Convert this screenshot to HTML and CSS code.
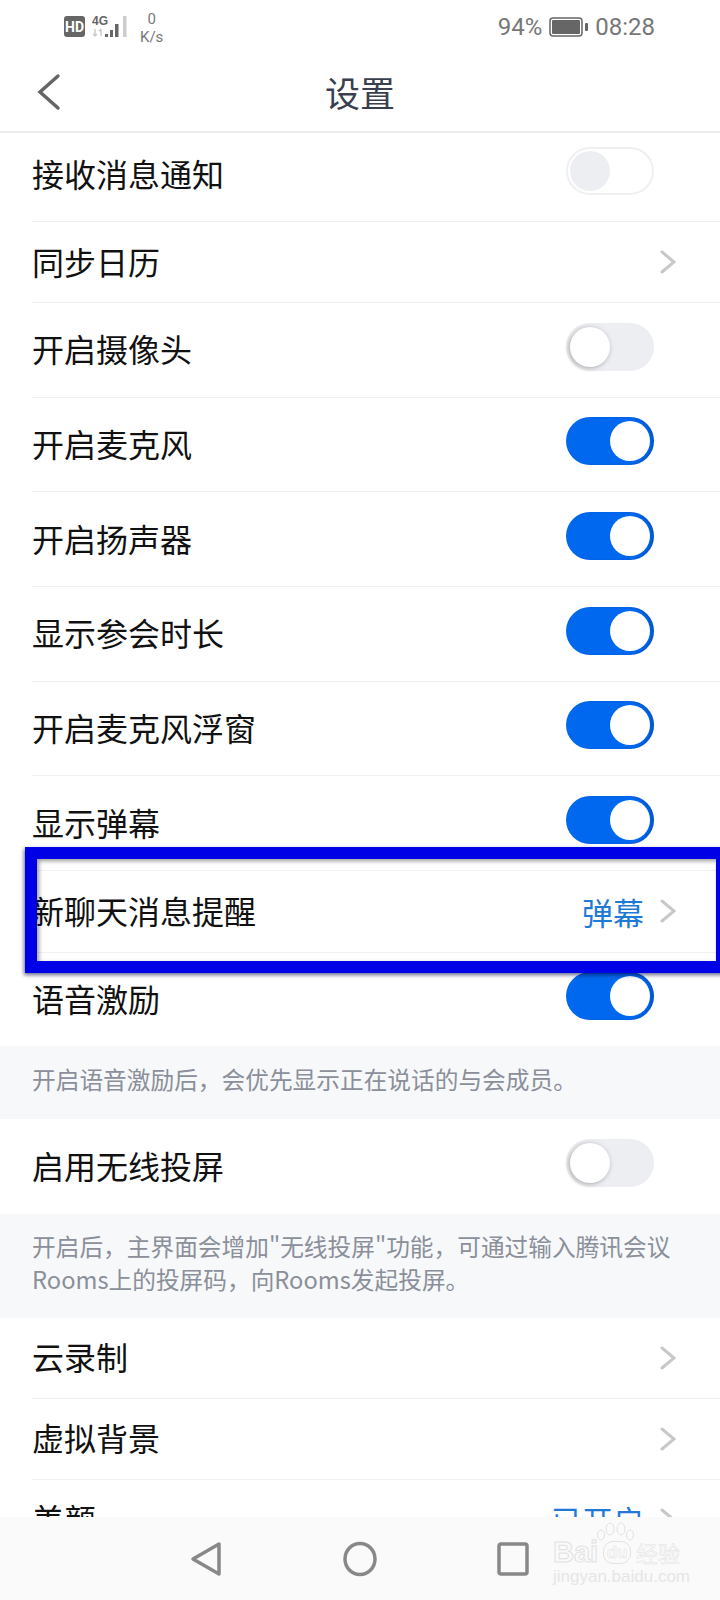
FILE: index.html
```html
<!DOCTYPE html>
<html lang="zh-CN">
  <head>
    <meta charset="UTF-8" />
    <meta name="viewport" content="width=device-width, initial-scale=1.0" />
    <title>设置</title>
    <link rel="stylesheet" href="styles.css">
  </head>
  <body>
    <div class="phone">
      <!-- Status bar -->
      <div class="status">
        <div class="status-left">
          <span class="hd">HD</span>
          <svg class="signal" width="38" height="34" viewBox="0 0 38 34">
            <text x="0" y="15" class="signal-text">4G</text>
            <path d="M3 19v7M1 24l2 2 2-2M9 26v-7M7 21l2-2" class="signal-arrows" />
            <rect x="13" y="24" width="3" height="3" fill="#666" />
            <rect x="18" y="20" width="3" height="7" fill="#666" />
            <rect x="23" y="14" width="3.500" height="13" fill="#666" />
            <rect x="31" y="6" width="3.500" height="21" fill="#ccc" />
          </svg>
          <div class="speed"><span>0</span><span>K/s</span></div>
        </div>
        <div class="status-right">
          <span>94%</span>
          <svg width="39" height="20" viewBox="0 0 39 20">
            <rect x="1" y="1" width="32" height="18" rx="3" fill="none" stroke="#666" stroke-width="1.500" />
            <rect x="3" y="3" width="28" height="14" rx="1" fill="#666" />
            <rect x="36" y="6" width="3" height="8" rx="1" fill="#666" />
          </svg>
          <span>08:28</span>
        </div>
      </div>

      <!-- Title bar -->
      <div class="header">
        <svg class="back" width="24" height="38" viewBox="0 0 24 38">
          <path d="M21 3 3 19l18 16" />
        </svg>
        <h1>设置</h1>
      </div>

      <!-- Settings list -->
      <div class="row row-first"><span>接收消息通知</span><div class="toggle toggle-disabled"><i></i></div></div>
      <div class="row row-short">
        <span>同步日历</span>
        <svg class="chevron" width="16" height="24" viewBox="0 0 16 24"><path d="M2 2l12 10L2 22" /></svg>
      </div>
      <div class="row"><span>开启摄像头</span><div class="toggle"><i></i></div></div>
      <div class="row"><span>开启麦克风</span><div class="toggle toggle-on"><i></i></div></div>
      <div class="row"><span>开启扬声器</span><div class="toggle toggle-on"><i></i></div></div>
      <div class="row"><span>显示参会时长</span><div class="toggle toggle-on"><i></i></div></div>
      <div class="row"><span>开启麦克风浮窗</span><div class="toggle toggle-on"><i></i></div></div>
      <div class="row"><span>显示弹幕</span><div class="toggle toggle-on"><i></i></div></div>
      <div class="row row-short row-chat">
        <span>新聊天消息提醒</span>
        <div class="row-end">
          <b>弹幕</b>
          <svg class="chevron" width="16" height="24" viewBox="0 0 16 24"><path d="M2 2l12 10L2 22" /></svg>
        </div>
      </div>
      <div class="row row-last row-voice"><span>语音激励</span><div class="toggle toggle-on"><i></i></div></div>
      <p class="note note-one">开启语音激励后，会优先显示正在说话的与会成员。</p>
      <div class="row row-last"><span>启用无线投屏</span><div class="toggle"><i></i></div></div>
      <p class="note note-two">开启后，主界面会增加"无线投屏"功能，可通过输入腾讯会议<br>Rooms上的投屏码，向Rooms发起投屏。</p>
      <div class="row row-short">
        <span>云录制</span>
        <svg class="chevron" width="16" height="24" viewBox="0 0 16 24"><path d="M2 2l12 10L2 22" /></svg>
      </div>
      <div class="row row-short">
        <span>虚拟背景</span>
        <svg class="chevron" width="16" height="24" viewBox="0 0 16 24"><path d="M2 2l12 10L2 22" /></svg>
      </div>
      <div class="row row-short">
        <span>美颜</span>
        <div class="row-end">
          <b>已开启</b>
          <svg class="chevron" width="16" height="24" viewBox="0 0 16 24"><path d="M2 2l12 10L2 22" /></svg>
        </div>
      </div>

      <!-- Annotation drawn over the screenshot -->
      <div class="highlight"></div>

      <!-- Navigation bar -->
      <div class="nav">
        <svg class="nav-back" width="32" height="36" viewBox="0 0 32 36">
          <path d="M29 3 3 18l26 15z" />
        </svg>
        <svg class="nav-home" width="36" height="36" viewBox="0 0 36 36">
          <ellipse cx="18" cy="18" rx="15" ry="15.500" />
        </svg>
        <svg class="nav-recent" width="32" height="34" viewBox="0 0 32 34">
          <rect x="2" y="2" width="28" height="30" rx="2" />
        </svg>
      </div>

      <!-- Watermark -->
      <div class="watermark">
        <svg class="paw" width="40" height="20" viewBox="0 0 40 20">
          <ellipse cx="6" cy="13" rx="3.500" ry="5" />
          <ellipse cx="15" cy="7" rx="4" ry="6" />
          <ellipse cx="26" cy="7" rx="4" ry="6" />
          <ellipse cx="35" cy="13" rx="3.500" ry="5" />
        </svg>
        <div class="mark-name"><span>Bai</span><span class="mark-du">du</span><span class="mark-cn">经验</span></div>
        <div class="mark-site">jingyan.baidu.com</div>
      </div>
    </div>
  </body>
</html>
```

FILE: styles.css
```css
* {
  box-sizing: border-box;
}
html,
body {
  margin: 0;
  padding: 0;
}
body {
  font-family: "Noto Sans CJK SC", "Noto Sans", sans-serif;
  background-color: white;
}
.phone {
  position: relative;
  width: 720px;
  height: 1600px;
  overflow: hidden;
  background-color: white;
}

/* Status bar */
.status {
  display: flex;
  justify-content: space-between;
  align-items: center;
  height: 50px;
  padding: 3px 65px 0 64px;
  color: #777;
  font-family: Roboto, "Liberation Sans", sans-serif;
  font-size: 24px;
}
.status-left,
.status-right {
  display: flex;
  align-items: center;
}
.status-right {
  gap: 7px;
}
.hd {
  display: flex;
  justify-content: center;
  align-items: center;
  width: 21px;
  height: 21px;
  border-radius: 3px;
  background-color: #666;
  color: white;
  font-size: 14px;
  font-weight: 700;
}
.signal {
  margin-left: 7px;
}
.signal-text {
  fill: #666;
  font-family: "Liberation Sans", sans-serif;
  font-size: 12px;
  font-weight: 700;
}
.signal-arrows {
  fill: none;
  stroke: #ccc;
  stroke-width: 1.500;
}
.speed {
  display: flex;
  flex-direction: column;
  align-items: center;
  margin: 3px 0 0 10px;
  font-size: 15px;
  line-height: 18px;
}

/* Title bar */
.header {
  position: relative;
  display: flex;
  justify-content: center;
  align-items: center;
  height: 83px;
  padding-top: 2px;
  border-bottom: 2px solid #ebecef;
}
.header h1 {
  margin: 0;
  color: #3a3f50;
  font-size: 35px;
  font-weight: 400;
}
.back {
  position: absolute;
  left: 37px;
  top: 23px;
  fill: none;
  stroke: #666;
  stroke-width: 3.500;
  stroke-linecap: round;
}

/* Rows */
.row {
  display: flex;
  justify-content: space-between;
  align-items: center;
  height: 94.67px;
  margin-left: 32px;
  padding-right: 66px;
  border-bottom: 1px solid #f0f1f3;
  color: #111;
  font-size: 32px;
  line-height: 36px;
}
.row > span {
  padding-bottom: 3px;
}
.row-first {
  height: 89px;
  padding-bottom: 6px;
  border-bottom-color: #ebecef;
}
.row-short {
  height: 81px;
  padding-right: 44px;
}
.row-chat {
  height: 82px;
}
.row-last {
  height: 95px;
  margin-left: 0;
  padding-left: 32px;
  border-bottom: none;
}
.row-voice {
  height: 93px;
}
.row-end {
  display: flex;
  align-items: center;
  gap: 16px;
}
.row-end b {
  color: #1f7ad6;
  font-size: 31px;
  font-weight: 400;
  line-height: 31px;
}
.chevron {
  fill: none;
  stroke: #c8c8c8;
  stroke-width: 3;
  stroke-linecap: round;
}

/* Toggles */
.toggle {
  position: relative;
  width: 88px;
  height: 48px;
  margin-bottom: 6px;
  border-radius: 24px;
  background-color: #eceef1;
}
.toggle i {
  position: absolute;
  top: 4px;
  left: 4px;
  width: 40px;
  height: 40px;
  border-radius: 50%;
  background-color: white;
  box-shadow: -1px 1px 5px rgba(0, 0, 0, 0.3);
}
.toggle-on {
  background-color: #0068ef;
  box-shadow: inset -3px 0 2px rgba(0, 40, 110, 0.25);
}
.toggle-on i {
  left: 44px;
  box-shadow: none;
}
.toggle-disabled {
  border: 2px solid #eff0f2;
  background-color: white;
}
.toggle-disabled i {
  top: 2px;
  left: 2px;
  background-color: #eceef1;
  box-shadow: none;
}

/* Explanatory notes */
.note {
  margin: 0;
  padding: 0 32px;
  background-color: #f7f8fa;
  color: #8a8f99;
  font-size: 23.700px;
  line-height: 33px;
}
.note-one {
  height: 73px;
  padding-top: 17px;
}
.note-two {
  height: 104px;
  padding-top: 16px;
}

/* Blue annotation box */
.highlight {
  position: absolute;
  left: 25px;
  top: 847px;
  width: 703px;
  height: 126px;
  border: 12px solid #0000e6;
  box-shadow: -1px 2px 4px rgba(0, 0, 60, 0.6), inset 2px 2px 4px rgba(0, 0, 0, 0.4);
}

/* Navigation bar */
.nav {
  position: absolute;
  left: 0;
  bottom: 0;
  width: 100%;
  height: 83px;
  background-color: #fafafa;
}
.nav svg {
  position: absolute;
  fill: none;
  stroke: #888;
  stroke-width: 3.500;
  stroke-linejoin: round;
}
.nav-back {
  left: 190px;
  top: 24px;
}
.nav-home {
  left: 342px;
  top: 24px;
}
.nav-recent {
  left: 497px;
  top: 25px;
}

/* Watermark */
.watermark {
  position: absolute;
  left: 553px;
  top: 1522px;
  width: 127px;
  font-family: "Liberation Sans", sans-serif;
}
.paw {
  display: block;
  margin: 0 0 -2px 42px;
  fill: #fafafa;
  stroke: #e2e2e2;
  stroke-width: 1;
}
.mark-name {
  display: flex;
  align-items: center;
  justify-content: space-between;
  height: 24px;
  color: #fafafa;
  font-size: 29px;
  font-weight: 700;
  line-height: 24px;
  white-space: nowrap;
  -webkit-text-stroke: 1px #e2e2e2;
}
.mark-du {
  padding: 0 3px;
  border: 1px solid #e2e2e2;
  border-radius: 10px;
  font-size: 17px;
  line-height: 21px;
  -webkit-text-stroke: 0.500px #e2e2e2;
}
.mark-cn {
  font-family: "Noto Sans CJK SC", sans-serif;
  font-size: 22px;
  font-weight: 400;
  -webkit-text-stroke: 0.500px #e2e2e2;
}
.mark-site {
  margin-top: 4px;
  color: #e6e6e6;
  font-size: 17px;
  line-height: 17px;
  white-space: nowrap;
}
```
